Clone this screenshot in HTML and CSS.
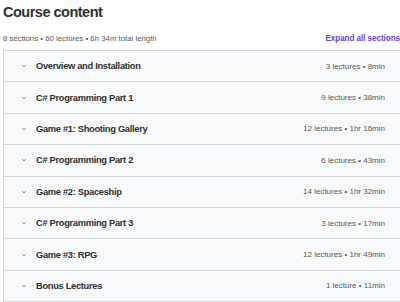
FILE: index.html
```html
<!DOCTYPE html>
<html lang="en">
<head>
  <meta charset="UTF-8">
  <title>Course content</title>
  <link rel="stylesheet" href="styles.css">
</head>
<body>
  <section class="curriculum">
    <h2 class="title">Course content</h2>
    <div class="summary">
      <span class="stats">8 sections • 60 lectures • 6h 34m total length</span>
      <button class="expand-all">Expand all sections</button>
    </div>
    <ul class="sections">
      <li class="section"><span class="chevron"><svg viewBox="0 0 10 10"><path d="M2.5 3.8 L5 6.2 L7.5 3.8" /></svg></span><span class="name">Overview and Installation</span><span class="meta">3 lectures • 8min</span></li>
      <li class="section"><span class="chevron"><svg viewBox="0 0 10 10"><path d="M2.5 3.8 L5 6.2 L7.5 3.8" /></svg></span><span class="name">C# Programming Part 1</span><span class="meta">9 lectures • 38min</span></li>
      <li class="section"><span class="chevron"><svg viewBox="0 0 10 10"><path d="M2.5 3.8 L5 6.2 L7.5 3.8" /></svg></span><span class="name">Game #1: Shooting Gallery</span><span class="meta">12 lectures • 1hr 16min</span></li>
      <li class="section"><span class="chevron"><svg viewBox="0 0 10 10"><path d="M2.5 3.8 L5 6.2 L7.5 3.8" /></svg></span><span class="name">C# Programming Part 2</span><span class="meta">6 lectures • 43min</span></li>
      <li class="section"><span class="chevron"><svg viewBox="0 0 10 10"><path d="M2.5 3.8 L5 6.2 L7.5 3.8" /></svg></span><span class="name">Game #2: Spaceship</span><span class="meta">14 lectures • 1hr 32min</span></li>
      <li class="section"><span class="chevron"><svg viewBox="0 0 10 10"><path d="M2.5 3.8 L5 6.2 L7.5 3.8" /></svg></span><span class="name">C# Programming Part 3</span><span class="meta">3 lectures • 17min</span></li>
      <li class="section"><span class="chevron"><svg viewBox="0 0 10 10"><path d="M2.5 3.8 L5 6.2 L7.5 3.8" /></svg></span><span class="name">Game #3: RPG</span><span class="meta">12 lectures • 1hr 49min</span></li>
      <li class="section"><span class="chevron"><svg viewBox="0 0 10 10"><path d="M2.5 3.8 L5 6.2 L7.5 3.8" /></svg></span><span class="name">Bonus Lectures</span><span class="meta">1 lecture • 11min</span></li>
    </ul>
  </section>
</body>
</html>
```
FILE: styles.css
```css
body {
  margin: 0;
  background: white;
  font-family: "Liberation Sans", Arial, sans-serif;
  color: #2d2f31;
  overflow: hidden;
}

.curriculum {
  padding: 2px 0 0 3px;
  width: 410px;
}

.title {
  margin: 0;
  font-size: 14.5px;
  font-weight: bold;
  line-height: 20px;
  letter-spacing: -0.5px;
}

.summary {
  display: flex;
  align-items: center;
  justify-content: space-between;
  width: 397px;
  margin-top: 9px;
  height: 14px;
}

.stats {
  font-size: 7.8px;
  color: #55585b;
}

.expand-all {
  all: unset;
  font-size: 8.2px;
  font-weight: bold;
  letter-spacing: -0.1px;
  color: #6a3fd3;
  cursor: pointer;
}

.sections {
  list-style: none;
  margin: 5px 0 0;
  padding: 0;
  border: 1px solid #d1d7dc;
  border-bottom: none;
}

.section {
  display: flex;
  align-items: center;
  height: 30.4px;
  border-bottom: 1px solid #d1d7dc;
  background: #f7f9fa;
  padding: 0 27px 0 16px;
}

.chevron {
  display: flex;
  width: 10px;
  margin-right: 6px;
}

.chevron svg {
  width: 8px;
  height: 8px;
  fill: none;
  stroke: #6a6f73;
  stroke-width: 0.9;
}

.name {
  font-size: 9.3px;
  font-weight: bold;
  letter-spacing: -0.3px;
  flex: 1;
}

.meta {
  font-size: 8px;
  color: #55585b;
}
```
